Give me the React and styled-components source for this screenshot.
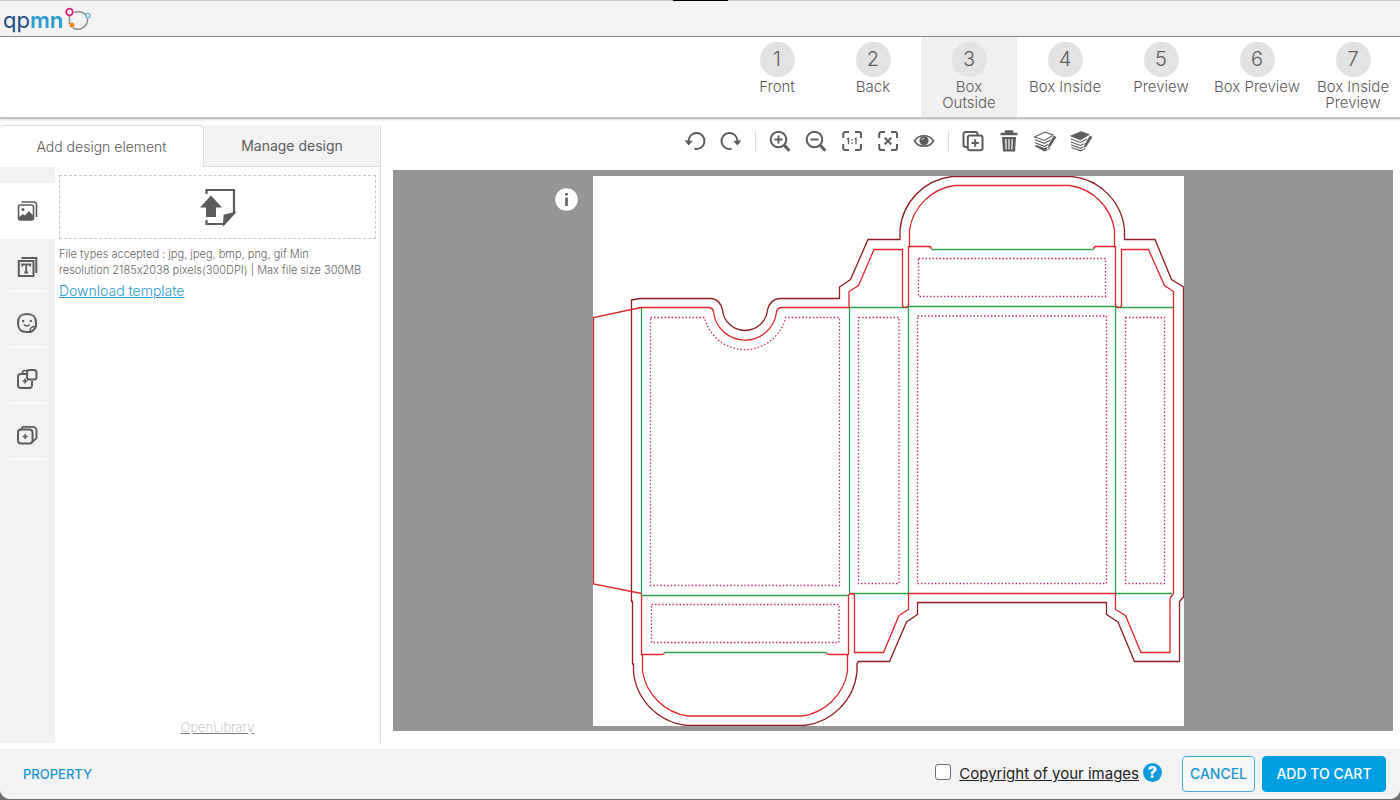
import React, { useState } from "react";
import styled, { createGlobalStyle } from "styled-components";

const GlobalStyle = createGlobalStyle`
  * {
    box-sizing: border-box;
  }
  body {
    margin: 0;
    background: #6f6f6f;
    color: #5c5c5c;
    font-family: Inter, "Liberation Sans", sans-serif;
    font-feature-settings: "calt" 0;
    overflow: hidden;
  }
  button {
    font-family: inherit;
    color: inherit;
    border: 0;
    padding: 0;
    background: none;
    cursor: pointer;
  }
`;

const Page = styled.div`
  display: flex;
  flex-direction: column;
  min-height: calc(100vh - 1px);
  background: white;
  border-radius: 0 0 10px 10px;
  overflow: hidden;
`;

/* header */

const TopBar = styled.header`
  position: relative;
  display: flex;
  align-items: center;
  height: 37px;
  padding: 3px 3px 0;
  background: #f3f3f3;
  border-top: 1px solid #c9c9cb;
  border-bottom: 1px solid #858585;
`;
const Notch = styled.span`
  position: absolute;
  top: -1px;
  left: 50%;
  width: 55px;
  height: 1px;
  margin-left: -27px;
  background: black;
`;
const Logo = styled.a`
  display: flex;
  align-items: center;
  height: 30px;
  color: #1f4e86;
  font-size: 22px;
  font-weight: 400;
  line-height: 24px;
  text-decoration: none;
`;
const LogoBold = styled.b`
  color: #2a9bd0;
  font-weight: 600;
`;
const Ring = styled.svg`
  width: 26px;
  height: 26px;
  margin-left: 2px;
`;

const StepBar = styled.nav`
  display: flex;
  justify-content: flex-end;
  height: 82px;
  margin-right: -1px;
  border-bottom: 2px solid #c4c4c4;
  box-shadow: 0 1px 2px #dddddd;
`;
const StepButton = styled.button`
  display: flex;
  flex-direction: column;
  align-items: center;
  width: 96px;
  padding: 5px 4px 0;
  background: ${(props) => (props.$active ? "#f0f0f0" : "transparent")};
`;
const StepNumber = styled.span`
  width: 35px;
  height: 35px;
  margin-bottom: 2px;
  border-radius: 50%;
  background: #e3e3e3;
  font-size: 20px;
  font-weight: 300;
  line-height: 35px;
`;
const StepName = styled.span`
  font-size: 15px;
  font-weight: 300;
  line-height: 16px;
  white-space: pre-line;
`;

/* left panel */

const Main = styled.main`
  display: flex;
  flex: 1;
  gap: 12px;
  padding-right: 7px;
`;
const Panel = styled.aside`
  display: flex;
  flex-direction: column;
  width: 381px;
  margin: 6px 0;
  border-right: 1px solid #dcdcdc;
`;
const Tabs = styled.div`
  display: flex;
`;
const Tab = styled.button`
  flex: ${(props) => (props.$active ? "0 0 204px" : "1")};
  height: 42px;
  background: ${(props) => (props.$active ? "white" : "#f2f2f2")};
  border: 1px solid #dcdcdc;
  border-width: ${(props) => (props.$active ? "1px 1px 0 0" : "0 0 1px 0")};
  border-radius: ${(props) => (props.$active ? "4px 4px 0 0" : "0")};
  font-size: 14px;
  font-weight: ${(props) => (props.$active ? "300" : "400")};
`;
const PanelBody = styled.div`
  display: flex;
  flex: 1;
`;
const Rail = styled.div`
  width: 55px;
  padding-top: 16px;
  background: #f1f1f1;
`;
const RailButton = styled.button`
  display: flex;
  align-items: center;
  justify-content: center;
  width: 100%;
  height: 56px;
  padding-right: 2px;
  background: ${(props) => (props.$active ? "white" : "transparent")};
`;
const RailLine = styled.hr`
  width: 36px;
  height: 2px;
  margin: -5px auto 3px;
  border: 0;
  background: #f9f9f9;
`;
const UploadPane = styled.div`
  display: flex;
  flex: 1;
  flex-direction: column;
  align-items: flex-start;
  padding: 8px 4px 7px;
`;
const DropZone = styled.label`
  display: flex;
  align-items: center;
  justify-content: center;
  width: 100%;
  height: 64px;
  border: 1px dashed #c8c8c8;
  cursor: pointer;
`;
const FileInput = styled.input`
  position: absolute;
  width: 1px;
  height: 1px;
  opacity: 0;
`;
const Hint = styled.p`
  margin: 7px 0 0;
  color: #666666;
  font-size: 11px;
  font-weight: 300;
  line-height: 16px;
`;
const TemplateLink = styled.a`
  margin-top: 4px;
  color: #2a9bd0;
  font-size: 14px;
  font-weight: 300;
  line-height: 18px;
`;
const LibraryLink = styled.a`
  margin: auto auto 0;
  color: #b5b5b5;
  font-size: 13px;
  font-weight: 200;
  line-height: 18px;
  text-decoration-color: #777777;
`;

/* editor */

const Workspace = styled.section`
  display: flex;
  flex: 1;
  flex-direction: column;
  margin-bottom: 18px;
`;
const Toolbar = styled.div`
  display: flex;
  align-items: center;
  justify-content: center;
  height: 51px;
  padding: 0 11px 8px 0;
`;
const Tool = styled.button`
  display: flex;
  align-items: center;
  justify-content: center;
  width: 36px;
  height: 36px;
`;
const Divider = styled.span`
  width: 1px;
  height: 20px;
  margin: 0 6px;
  background: #dddddd;
`;
const Canvas = styled.div`
  display: grid;
  flex: 1;
  grid-template-columns: 1fr auto 1fr;
  padding: 6px 9px 5px 0;
  background: #959595;
`;
const InfoButton = styled.button`
  justify-self: end;
  align-self: start;
  width: 23px;
  height: 23px;
  margin: 12px 15px 0 0;
`;
const Sheet = styled.svg`
  display: block;
  width: 591px;
  max-width: 100%;
  background: white;
`;
const IconSvg = styled.svg`
  display: block;
  flex: none;
  fill: none;
  stroke: currentColor;
  stroke-width: 2;
`;

/* footer */

const Footer = styled.footer`
  display: flex;
  align-items: center;
  height: 50px;
  padding: 0 14px 2px 23px;
  background: #f3f3f3;
  border-top: 1px solid #ececec;
`;
const PropertyButton = styled.button`
  margin-right: auto;
  color: #1b95d2;
  font-size: 13px;
  font-weight: 500;
`;
const Agree = styled.div`
  display: flex;
  align-items: center;
  gap: 8px;
  margin-right: 20px;
`;
const CheckBox = styled.input`
  appearance: none;
  width: 16px;
  height: 16px;
  margin: 0 0 4px;
  border: 1px solid #707070;
  border-radius: 3px;
  background: white;
  &:checked {
    background: #009fe3;
  }
`;
const AgreeText = styled.label`
  color: #222222;
  font-size: 15px;
  text-decoration: underline;
`;
const Help = styled.button`
  width: 19px;
  height: 19px;
  margin: 0 0 2px -4px;
  border-radius: 50%;
  background: #119bdc;
  color: white;
  font-size: 16px;
  font-weight: 800;
  line-height: 19px;
`;
const Action = styled.button`
  height: 36px;
  width: ${(props) => (props.$primary ? "124px" : "73px")};
  margin-left: ${(props) => (props.$primary ? "7px" : "0")};
  border: 1px solid ${(props) => (props.$primary ? "#009fe3" : "#4bacdc")};
  border-radius: 4px;
  background: ${(props) => (props.$primary ? "#009fe3" : "#f7f7f7")};
  color: ${(props) => (props.$primary ? "white" : "#1b95d2")};
  font-size: 14px;
  font-weight: 500;
`;

const Icon = ({ size = 24, children }) => (
  <IconSvg width={size} height={size} viewBox="0 0 24 24" aria-hidden="true">
    {children}
  </IconSvg>
);

const brackets =
  "M9 3H5.200a2 2 0 0 0-2 2v4M15 3h4a2 2 0 0 1 2 2v4M9 21H5.200a2 2 0 0 1-2-2v-4M15 21h4a2 2 0 0 0 2-2v-4";

const pencil = (
  <path
    d="M20.800 6l3 2-6 9.500-3.800 2.800 1.200-4.800z"
    fill="currentColor"
    stroke="white"
    strokeWidth=".8"
  />
);

const icons = {
  undo: (
    <>
      <path d="M11.500 19.800A8 8 0 1 0 5.500 12" />
      <path d="M1.600 11.300l8 .8-4 4.400z" fill="currentColor" stroke="none" />
    </>
  ),
  redo: (
    <>
      <path d="M12.500 19.800A8 8 0 1 1 18.500 12" />
      <path d="M22.400 11.300l-8 .8 4 4.400z" fill="currentColor" stroke="none" />
    </>
  ),
  zoomIn: (
    <>
      <circle cx="10.500" cy="10.500" r="7.800" />
      <path d="M6.500 10.500h8M10.500 6.500v8" />
      <path d="M16.500 16.500l4.800 5.200" strokeWidth="3" />
    </>
  ),
  zoomOut: (
    <>
      <circle cx="10.500" cy="10.500" r="7.800" />
      <path d="M6.500 10.500h8" />
      <path d="M16.500 16.500l4.800 5.200" strokeWidth="3" />
    </>
  ),
  actual: (
    <>
      <path d={brackets} />
      <path d="M7 10l1.500-.7v6M14.500 10l1.500-.7v6" strokeWidth="1.300" />
      <path d="M12 10v1.500M12 13.500v1.500" strokeWidth="1.300" />
    </>
  ),
  fit: (
    <>
      <path d={brackets} />
      <path d="M9 9l6 6M15 9l-6 6" strokeWidth="1.800" />
      <path d="M8.500 8.500h2l-2 2zM15.500 8.500h-2l2 2zM8.500 15.500h2l-2-2zM15.500 15.500h-2l2-2z" fill="currentColor" stroke="none" />
    </>
  ),
  eye: (
    <>
      <path d="M2.500 12C6.500 5 17.500 5 21.500 12 17.500 19 6.500 19 2.500 12z" strokeWidth="1.600" />
      <circle cx="12" cy="11.800" r="4.600" fill="currentColor" stroke="none" />
      <path d="M9.800 11a2.500 2.500 0 0 1 2-1.800" stroke="#fff" strokeWidth="1" />
    </>
  ),
  copy: (
    <>
      <path d="M6 18H4.500a2 2 0 0 1-2-2V5a2 2 0 0 1 2-2h10a2 2 0 0 1 2 2v1" />
      <rect x="6.800" y="6.500" width="14.700" height="14.800" rx="2" />
      <path d="M14.200 10.300v7.400M10.500 14h7.400" />
    </>
  ),
  trash: (
    <>
      <path d="M3.500 5h17M9 4V2.500h6V4" strokeWidth="2.600" />
      <path d="M5 8h14l-1 14.500H6z" fill="currentColor" stroke="none" />
      <path d="M8.800 10l.4 10.500M12 10v10.500M15.200 10l-.4 10.500" stroke="#fff" strokeWidth="1.200" />
    </>
  ),
  layerBottom: (
    <>
      <path d="M1.500 8L12 3l8.500 3.200-9 5.300z" strokeWidth="1.100" />
      <path d="M2 10.800l9.500 3.500 6.500-3.600M2 13.800l9.500 3.500 4-2" strokeWidth="1.100" />
      <path d="M1.500 17l2-1 8 3 3-1.500 3 2-6 3z" fill="currentColor" stroke="none" />
      {pencil}
    </>
  ),
  layerTop: (
    <>
      <path d="M1.500 7L12 2.500l8.500 3-9 5.500z" fill="currentColor" strokeWidth=".6" />
      <path d="M2 10l9.500 3.500 6.500-3.600M2 13l9.500 3.500 4-2M2 15.800l9.500 3.500 4-2M2.500 18.600l9 3.200 5-2.200" strokeWidth="1.100" />
      {pencil}
    </>
  ),
  image: (
    <>
      <path d="M6.500 3H19a2.500 2.500 0 0 1 2.500 2.500V18" strokeWidth="1.600" />
      <rect x="3.500" y="6" width="15" height="15" rx="2" strokeWidth="1.600" />
      <circle cx="8" cy="10.500" r="1.500" fill="currentColor" stroke="none" />
      <path d="M4 18l4-3 2 1.500 4-4.500 4.500 5v4H4z" fill="currentColor" stroke="none" />
    </>
  ),
  text: (
    <>
      <path d="M6.500 3H21.300V18" />
      <rect x="3.800" y="6" width="14.700" height="15" />
      <path d="M7.200 11.500v-2.200h8v2.200M11.200 9.500v8M9.300 17.500h3.800" strokeWidth="1.800" />
    </>
  ),
  sticker: (
    <>
      <path d="M21 12c0-6-2-9-9-9s-9 3-9 9 2 9 9 9h3c2 0 6-4 6-6z" />
      <path d="M15 21c0-4 1-5.500 6-5.500" strokeWidth="1.600" />
      <path d="M8.500 9v2.300M15.500 9v2.300M7 10h2M15 10h2" strokeWidth="1.400" />
      <path d="M9 13.500c1.500 2 4 2 5.500 0" strokeWidth="1.600" />
    </>
  ),
  shapes: (
    <>
      <path d="M11 7H5.500a2.500 2.500 0 0 0-2.500 2.500v9A2.500 2.500 0 0 0 5.500 21h9a2.500 2.500 0 0 0 2.500-2.500V14" />
      <rect x="12" y="3" width="9.500" height="9.500" rx="2.500" />
      <path d="M7.500 7V6a2.500 2.500 0 0 1 2.500-2.500h2M10 11.500v5M7.500 14h5" strokeWidth="1.600" />
    </>
  ),
  pages: (
    <>
      <rect x="3" y="6.500" width="14.500" height="14" rx="3" />
      <path d="M6 6l2-2.200h10a3.500 3.500 0 0 1 3.500 3.500V15l-3.500 3.500" strokeWidth="1.800" />
      <path d="M10.200 11v5M7.700 13.500h5" strokeWidth="1.600" />
    </>
  ),
};

const steps = [
  "Front",
  "Back",
  "Box\nOutside",
  "Box Inside",
  "Preview",
  "Box Preview",
  "Box Inside\nPreview",
];

const railItems = [
  ["image", "Images"],
  ["text", "Text"],
  ["sticker", "Stickers"],
  ["shapes", "Shapes"],
  ["pages", "Pages"],
];

const toolGroups = [
  [
    ["undo", "Undo"],
    ["redo", "Redo"],
  ],
  [
    ["zoomIn", "Zoom in"],
    ["zoomOut", "Zoom out"],
    ["actual", "Actual size"],
    ["fit", "Fit"],
    ["eye", "Show guides"],
  ],
  [
    ["copy", "Duplicate"],
    ["trash", "Delete"],
    ["layerBottom", "Send to back"],
    ["layerTop", "Bring to front"],
  ],
];

// bleed edge, cut lines, folds and safe areas of the tuck box
const Dieline = () => (
  <Sheet viewBox="593 176 591 550" role="img" aria-label="Box outside">
    <g fill="none" strokeWidth="1.300">
      <path
        stroke="#8f1d22"
        d="M631.500 300L640 298.500H711Q720 299 722.500 310A22.600 22.600 0 0 0 767.500 310Q770 299 780 298.500H839.500V287L850.500 279.500 868 239.500H900V230A59 59 0 0 1 952 176.500H1072A59 59 0 0 1 1124.500 230V239.500H1155L1171.500 279.500 1183.500 287V597L1179.500 601.500V661.500H1134.500L1118 622 1106.500 614.500V602.500H917.500V614.500L906.500 622 889.500 661.500H858.500L857 663.500V672A60 60 0 0 1 804 725.500H687A60 60 0 0 1 633.500 672V664H632.500V601.500H631.500z"
      />
      <path
        stroke="#2da351"
        d="M641.500 308V595.500H849M849.500 308V593.500H908.500V306.500H1115.500V593.500H1172M849.500 307.500H908.500M1116 307.500H1173.500M931.500 249.500H1093.500M664.500 652.500H826.500"
      />
      <g stroke="#e0262c">
        <path d="M641.500 593.500L593.500 584V317.500L641 307.500H709Q713 308 713.500 312A31.700 31.700 0 0 0 776.500 312Q777.500 308 781 307.500H849V291.500L858.500 285.500 874 249.500H902.500V305.500Q903 307.500 906 307.500L908.500 305.500V246.500H929Q931 246.500 931.500 249" />
        <path d="M909.500 246.500V230A53 53 0 0 1 955 185.500H1070A53 53 0 0 1 1114.500 230V246.500M1093.500 249Q1094 246.500 1096 246.500H1115.500V305.500L1118 307.500Q1121 307.500 1121.500 305.500V249.500H1148.500L1164.500 285.500 1173.500 291.500V593.500L1170 598V652.500H1141L1125.500 615.500 1115.500 609.500V593.500H908.500V609.500L899 615.500 883.500 652.500H854.500V596Q854.500 593.500 851 593.500L848.500 595V654.500H829Q827 654.500 826.500 652.500" />
        <path d="M641.500 595V654.500H662Q664 654.500 664.500 652.500M642.500 654.500V671.500A54 54 0 0 0 688 716H802A54 54 0 0 0 847.500 671.500V654.500" />
      </g>
      <g stroke="#c92a7a" strokeDasharray="1.500 2">
        <path d="M650.500 317.500H704.500A41.600 41.600 0 0 0 785.500 317.500H839.500V585.500H650.500z" />
        <path d="M858.500 317.500H899V583.500H858.500zM917.500 316H1106.500V583.500H917.500zM1125.500 317.500H1164.500V583.500H1125.500zM918.500 258.500H1105.500V296.500H918.500zM651.500 604.500H839V642.500H651.500z" />
      </g>
    </g>
  </Sheet>
);

const App = () => {
  const [step, setStep] = useState(2);
  const [tool, setTool] = useState("image");

  return (
    <>
      <GlobalStyle />
      <Page>
        <TopBar>
          <Notch />
          <Logo href="#">
            qp<LogoBold>mn</LogoBold>
            <Ring viewBox="0 0 26 26" fill="none">
              <path d="M9.500 5.500A9.800 9.800 0 0 1 21.500 9M22.500 11.500A9.800 9.800 0 0 1 8 21M4.500 17V9" stroke="#8b8b8b" strokeWidth="1.500" />
              <circle cx="4.500" cy="5" r="3.300" stroke="#d6247c" strokeWidth="1.800" />
              <circle cx="22.800" cy="8.500" r="2.200" stroke="#5fb4dd" strokeWidth="1.300" />
              <circle cx="7" cy="18" r="2.500" fill="#f08a1d" />
            </Ring>
          </Logo>
        </TopBar>
        <StepBar>
          {steps.map((name, index) => (
            <StepButton
              key={name}
              $active={index === step}
              onClick={() => setStep(index)}
            >
              <StepNumber>{index + 1}</StepNumber>
              <StepName>{name}</StepName>
            </StepButton>
          ))}
        </StepBar>
        <Main>
          <Panel>
            <Tabs>
              <Tab $active>Add design element</Tab>
              <Tab>Manage design</Tab>
            </Tabs>
            <PanelBody>
              <Rail>
                {railItems.map(([name, label], index) => (
                  <React.Fragment key={name}>
                    <RailButton
                      aria-label={label}
                      $active={tool === name}
                      onClick={() => setTool(name)}
                    >
                      <Icon>{icons[name]}</Icon>
                    </RailButton>
                    {index > 0 && <RailLine />}
                  </React.Fragment>
                ))}
              </Rail>
              <UploadPane>
                <DropZone>
                  <FileInput type="file" aria-label="Upload image" />
                  <IconSvg width="36" height="40" viewBox="0 0 36 40">
                    <path d="M6.500 7V3H34V26L24 37H6.500V33" strokeWidth="2.200" />
                    <path d="M11 8.500L22 20.500H16V30H6V20.500H0z" fill="currentColor" stroke="none" />
                    <path d="M34 26l-10 11 .5-8.500z" fill="currentColor" />
                  </IconSvg>
                </DropZone>
                <Hint>
                  File types accepted : jpg, jpeg, bmp, png, gif Min
                  <br />
                  resolution 2185x2038 pixels(300DPI) | Max file size 300MB
                </Hint>
                <TemplateLink href="#">Download template</TemplateLink>
                <LibraryLink href="#">OpenLibrary</LibraryLink>
              </UploadPane>
            </PanelBody>
          </Panel>
          <Workspace>
            <Toolbar>
              {toolGroups.map((group, index) => (
                <React.Fragment key={index}>
                  {index > 0 && <Divider />}
                  {group.map(([name, label]) => (
                    <Tool key={name} aria-label={label}>
                      <Icon>{icons[name]}</Icon>
                    </Tool>
                  ))}
                </React.Fragment>
              ))}
            </Toolbar>
            <Canvas>
              <InfoButton aria-label="Info">
                <svg width="23" height="23" viewBox="0 0 23 23">
                  <circle cx="11.500" cy="11.500" r="11.300" fill="white" />
                  <path d="M11.500 9.500v8.500M11.500 5v2.500" stroke="#5c5c5c" strokeWidth="2.600" />
                </svg>
              </InfoButton>
              <Dieline />
            </Canvas>
          </Workspace>
        </Main>
        <Footer>
          <PropertyButton>PROPERTY</PropertyButton>
          <Agree>
            <CheckBox type="checkbox" id="agree" />
            <AgreeText htmlFor="agree">Copyright of your images</AgreeText>
            <Help aria-label="Help">?</Help>
          </Agree>
          <Action>CANCEL</Action>
          <Action $primary>ADD TO CART</Action>
        </Footer>
      </Page>
    </>
  );
};

export default App;
